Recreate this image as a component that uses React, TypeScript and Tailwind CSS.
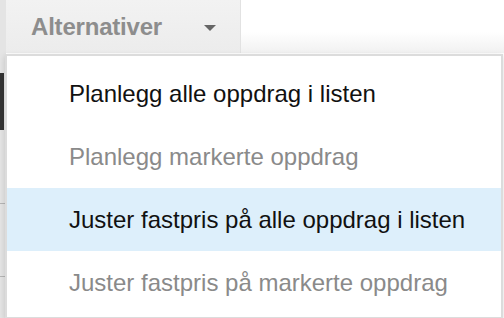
import React from "react";

const items = [
  { label: "Planlegg alle oppdrag i listen", enabled: true, active: false },
  { label: "Planlegg markerte oppdrag", enabled: false, active: false },
  { label: "Juster fastpris på alle oppdrag i listen", enabled: true, active: true },
  { label: "Juster fastpris på markerte oppdrag", enabled: false, active: false },
];

const App = () => {
  return (
    <div
      className="relative w-[504px] h-[318px] overflow-hidden bg-white"
      style={{ fontFamily: '"Liberation Sans", Arial, sans-serif' }}
    >
      {/* Underlying page */}
      <div className="flex h-full">
        <div className="flex flex-col w-[6px] bg-[#e4e4e4]">
          <div className="h-[73px]" />
          <div className="h-[57px] w-[4px] bg-[#333]" />
          <div className="h-[73px]" />
          <div className="h-[1px] bg-[#b5b5b5]" />
          <div className="h-[72px]" />
          <div className="h-[1px] bg-[#b5b5b5]" />
        </div>
        <div className="flex flex-col flex-1">
          <div className="flex">
            <button className="flex items-center w-[235px] h-[53px] pl-[25px] pr-[24px] bg-gradient-to-b from-[#f2f2f2] to-[#ececec] border-r border-[#e2e2e2]">
              <span className="text-[24px] font-bold text-[#8d8d8d] tracking-[-0.2px]">Alternativer</span>
              <svg className="ml-auto mt-[2px]" width="12" height="6" viewBox="0 0 12 6">
                <path d="M0 0h12L6 6z" fill="#666" />
              </svg>
            </button>
            <div className="flex-1 h-[53px] bg-gradient-to-b from-white from-60% to-[#f1f1f1]" />
          </div>
        </div>
      </div>

      {/* Dropdown menu */}
      <div className="absolute left-[5px] top-[54px] w-[498px] pt-[6px] pb-[3px] bg-white border-2 border-[#dcdcdc] shadow-[0_2px_6px_rgba(0,0,0,0.15)]">
        {items.map((item) => (
          <div
            key={item.label}
            className={`flex items-center h-[63px] pl-[62px] text-[24px] ${
              item.active ? "bg-[#ddeffb]" : ""
            } ${item.enabled ? "text-[#111]" : "text-[#8a8a8a]"}`}
          >
            {item.label}
          </div>
        ))}
      </div>
    </div>
  );
};

export default App;
